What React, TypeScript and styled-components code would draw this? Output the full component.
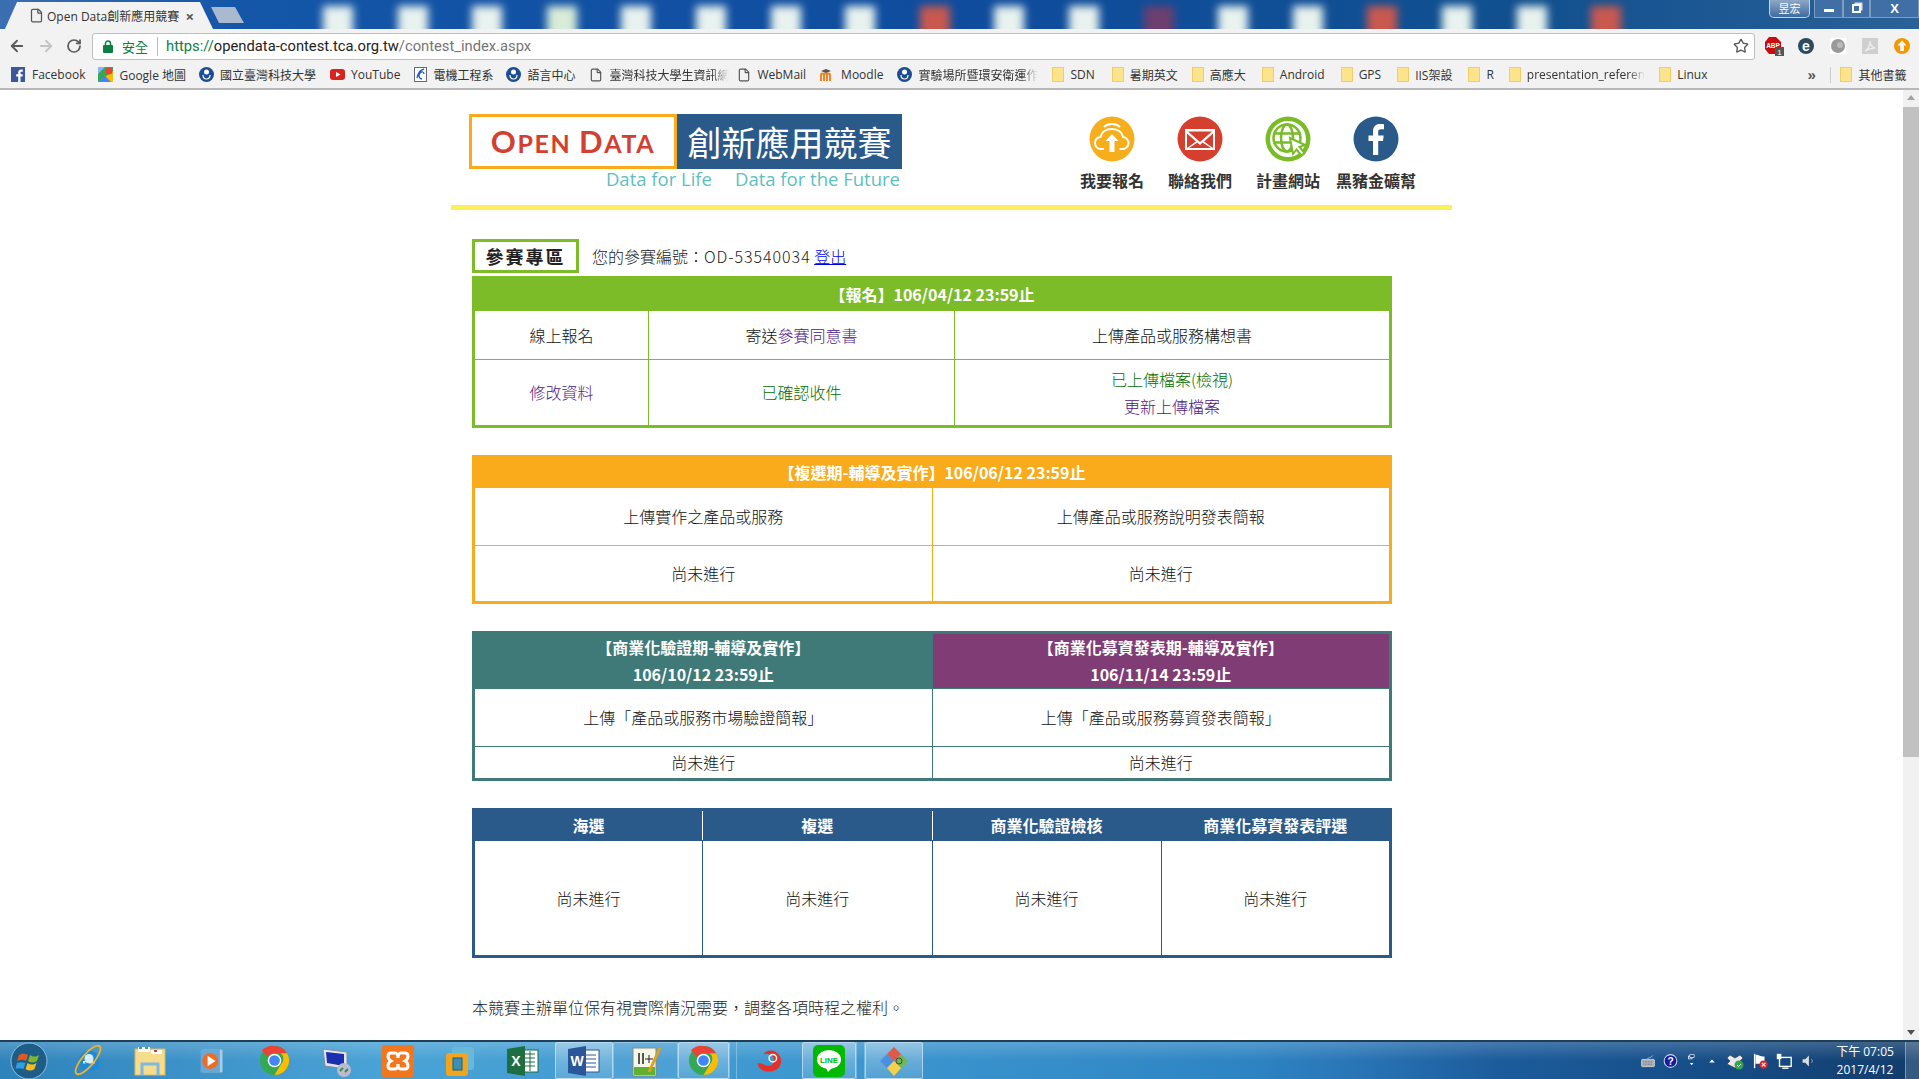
import { ArrowLeft, ArrowRight, File, RotateCw, Star } from "lucide-react";
import type { ReactNode } from "react";
import styled, { createGlobalStyle } from "styled-components";

const BODY_FONT = `"Noto Sans CJK TC", "Noto Sans", sans-serif`;
const UI_FONT = `"Open Sans", "Noto Sans CJK TC", sans-serif`;

const GlobalStyle = createGlobalStyle`
	html, body {
		height: 100%;
		margin: 0;
		overflow: hidden;
	}

	* {
		box-sizing: border-box;
	}
`;

const Screen = styled.div`
	display: flex;
	flex-direction: column;
	height: 100vh;
	background: #fff;
	font-family: ${BODY_FONT};
`;

/* ---------- tab strip ---------- */

const TabStrip = styled.div`
	display: flex;
	flex: none;
	height: 29px;
	overflow: hidden;
	background: linear-gradient(90deg, #3c6eb2 0, #1456a8 12%, #0f4c9e 50%, #11508f 80%, #2a6198 100%);
`;

const Tab = styled.div`
	display: flex;
	flex: none;
	align-items: center;
	gap: 3px;
	width: 208px;
	height: 27px;
	margin: 2px 0 0 5px;
	padding: 0 19px 0 24px;
	font-family: ${UI_FONT};
	font-size: 12px;
	color: #333;
	white-space: nowrap;
	background: #f2f2f2;
	clip-path: polygon(0 100%, 12px 0, 195px 0, 100% 100%);
`;

const TabTitle = styled.span`
	flex: 1;
`;

const TabClose = styled.span`
	font-size: 15px;
	font-weight: 700;
	color: #555;
`;

const NewTab = styled.div`
	flex: none;
	width: 33px;
	height: 16px;
	margin: 7px 0 0 -2px;
	background: #a9b9d0;
	clip-path: polygon(0 0, 24px 0, 100% 100%, 8px 100%);
`;

const Wallpaper = styled.div`
	display: flex;
	flex: 1;
	gap: 44.6px;
	min-width: 0;
	padding: 6px 0 0 79px;
	filter: blur(4px);
`;

const WallpaperIcon = styled.div<{ $tone: string }>`
	flex: none;
	width: 30px;
	height: 40px;
	background: ${({ $tone }) => $tone};
`;

const WindowControls = styled.div`
	display: flex;
	flex: none;
	height: 18px;
`;

const UserBadge = styled.div`
	width: 41px;
	margin-right: 4px;
	font-size: 11px;
	line-height: 16px;
	color: #fff;
	text-align: center;
	background: linear-gradient(#8ea7c6, #3f6c9f);
	border: 1px solid #c6d3e2;
	border-top: 0;
	border-radius: 0 0 5px 5px;
`;

const WindowButton = styled.div<{ $w: number }>`
	display: flex;
	align-items: center;
	justify-content: center;
	width: ${({ $w }) => $w}px;
	font-family: "Liberation Sans", sans-serif;
	font-size: 13px;
	font-weight: 700;
	color: #fff;
	background: #3f6fa4;
	border: 1px solid #7d9cc0;
	border-top: 0;
`;

const MinGlyph = styled.span`
	width: 10px;
	height: 3px;
	margin-top: 3px;
	background: #fff;
`;

const MaxGlyph = styled.span`
	width: 9px;
	height: 9px;
	border: 2px solid #fff;
	box-shadow: 2px -2px 0 -0.5px #dde;
`;

/* ---------- toolbar ---------- */

const Toolbar = styled.div`
	display: flex;
	flex: none;
	align-items: center;
	height: 32px;
	padding: 2px 0 0 8px;
	background: #f2f2f2;
`;

const NavButtons = styled.div`
	display: flex;
	flex: none;
	gap: 11px;
	align-items: center;
	width: 84px;
`;

const Omnibox = styled.div`
	display: flex;
	flex: none;
	align-items: center;
	width: 1663px;
	height: 27px;
	padding: 0 5px 0 10px;
	background: #fff;
	border: 1px solid #bfbfbf;
	border-radius: 3px;
`;

const SecureLabel = styled.span`
	margin-left: 9px;
	padding-right: 9px;
	font-size: 13px;
	color: #0b8043;
	border-right: 1px solid #bbb;
`;

const Url = styled.span`
	flex: 1;
	margin-left: 8px;
	font-family: "Roboto", sans-serif;
	font-size: 14.75px;
	color: #757575;
`;

const UrlPart = styled.span<{ $color: string }>`
	color: ${({ $color }) => $color};
`;

const Extensions = styled.div`
	display: flex;
	flex: 1;
	gap: 12px;
	align-items: center;
	padding-left: 9px;
`;

/* ---------- bookmarks ---------- */

const BookmarkBar = styled.div`
	display: flex;
	flex: none;
	align-items: center;
	height: 29px;
	padding-left: 11px;
	overflow: hidden;
	background: #f2f2f2;
	border-bottom: 2px solid #b8b8b8;
`;

const Bookmark = styled.div<{ $gap: number }>`
	display: flex;
	flex: none;
	gap: 6px;
	align-items: center;
	margin-right: ${({ $gap }) => $gap}px;
	font-family: ${UI_FONT};
	font-size: 12px;
	color: #333;
	white-space: nowrap;
`;

const BookmarkLabel = styled.span<{ $fade?: boolean }>`
	display: block;
	${({ $fade }) => $fade && "mask-image: linear-gradient(90deg, #000 86%, transparent 100%);"}
`;

const FolderIcon = styled.span`
	display: block;
	flex: none;
	width: 12px;
	height: 15px;
	background: #fde38c;
	border: 1px solid #f0cd66;
`;

const Overflow = styled.span`
	flex: none;
	width: 23px;
	font-family: "Liberation Sans", sans-serif;
	font-size: 15px;
	font-weight: 700;
	color: #555;
`;

const BarSeparator = styled.span`
	flex: none;
	width: 1px;
	height: 16px;
	margin-right: 9px;
	background: #ccc;
`;

/* ---------- page ---------- */

const Viewport = styled.div`
	display: flex;
	flex: 1;
	min-height: 0;
`;

const PageScroll = styled.div`
	flex: 1;
	overflow: hidden;
`;

const Scrollbar = styled.div`
	display: flex;
	flex: none;
	flex-direction: column;
	align-items: center;
	width: 16px;
	background: #f1f1f1;
`;

const ScrollArrow = styled.span<{ $down?: boolean }>`
	flex: none;
	width: 0;
	height: 0;
	margin: 5px 0;
	border-right: 4px solid transparent;
	border-left: 4px solid transparent;
	${({ $down }) => ($down ? "border-top: 5px solid #505050;" : "border-bottom: 5px solid #a3a3a3;")}
`;

const ScrollThumb = styled.div`
	flex: none;
	width: 100%;
	height: 650px;
	margin-top: 2px;
	background: #c1c1c1;
`;

const ScrollRest = styled.div`
	flex: 1;
`;

const Page = styled.div`
	width: 1001px;
	margin: 0 auto;
`;

const Header = styled.header`
	display: flex;
	justify-content: space-between;
	height: 120px;
	padding: 24px 36px 0 18px;
	border-bottom: 5px solid #ffef57;
`;

const Brand = styled.div`
	width: 433px;
`;

const LogoRow = styled.div`
	display: flex;
	height: 55px;
`;

const LogoOpen = styled.div`
	display: flex;
	align-items: baseline;
	justify-content: center;
	width: 208px;
	padding-top: 5px;
	font-family: "Lato", sans-serif;
	font-size: 25px;
	font-weight: 700;
	letter-spacing: 1.6px;
	color: #d33f31;
	white-space: pre;
	border: 3px solid #f9ab1b;
`;

const LogoCap = styled.span`
	font-size: 31px;
`;

const LogoTitle = styled.div`
	display: flex;
	flex: 1;
	align-items: center;
	justify-content: center;
	font-size: 34px;
	line-height: 1;
	color: #fff;
	background: #2a5a8a;
`;

const Tagline = styled.div`
	display: flex;
	gap: 23px;
	justify-content: flex-end;
	padding-right: 2px;
	font-family: "Open Sans", sans-serif;
	font-size: 18.5px;
	line-height: 20px;
	color: #5dbfc1;
`;

const QuickLinks = styled.nav`
	display: flex;
	gap: 8px;
	padding-top: 2px;
`;

const QuickLink = styled.div`
	display: flex;
	flex-direction: column;
	gap: 7px;
	align-items: center;
	width: 80px;
	font-size: 16px;
	font-weight: 700;
	line-height: 22px;
	color: #333;
	white-space: nowrap;
`;

const Content = styled.main`
	padding: 29px 0 0 21px;
`;

const ZoneHead = styled.div`
	display: flex;
	gap: 13px;
	align-items: center;
	height: 34px;
	margin-bottom: 3px;
	font-size: 16px;
	font-weight: 300;
	color: #222;
`;

const ZoneBadge = styled.div`
	flex: none;
	width: 107px;
	font-size: 18px;
	font-weight: 700;
	line-height: 28px;
	letter-spacing: 2px;
	text-align: center;
	border: 3px solid #7cbc28;
`;

const ZoneCode = styled.span`
	letter-spacing: 0.95px;
`;

const ZoneLink = styled.a`
	color: #0000ee;
	text-decoration: underline;
`;

const StageTable = styled.table<{ $accent: string }>`
	width: 920px;
	margin-bottom: 27px;
	font-size: 16px;
	font-weight: 300;
	line-height: 27px;
	color: #111;
	text-align: center;
	table-layout: fixed;
	border-collapse: collapse;
	border: 3px solid ${({ $accent }) => $accent};

	th {
		padding: 0;
		font-weight: 700;
		color: #fff;
		background: ${({ $accent }) => $accent};
		border: 1px solid ${({ $accent }) => $accent};
	}

	td {
		padding: 0;
		border: 1px solid ${({ $accent }) => $accent};
	}
`;

const SplitHead = styled.th<{ $bg: string }>`
	&& {
		background: ${({ $bg }) => $bg};
	}
`;

const LightDivider = styled.th`
	&& {
		border-right-color: #fff;
	}
`;

const Row = styled.tr<{ $h: number }>`
	height: ${({ $h }) => $h}px;
`;

const Col = styled.col<{ $w: number }>`
	width: ${({ $w }) => $w}px;
`;

const Visited = styled.span`
	color: #4b1585;
`;

const Done = styled.span`
	color: #006f00;
`;

const Notice = styled.p`
	margin: 36px 0 0;
	font-size: 16px;
	font-weight: 300;
	line-height: 27px;
	color: #222;
`;

/* ---------- taskbar ---------- */

const Taskbar = styled.footer`
	display: flex;
	flex: none;
	align-items: stretch;
	height: 39px;
	background:
		linear-gradient(rgb(255 255 255 / 18%), rgb(255 255 255 / 0%) 50%),
		linear-gradient(90deg, #2f83bb 0, #4aa3d6 20%, #3c96cf 45%, #2e84c3 65%, #2a77b8 70%, #1c5c9c 78%, #164c85 90%, #123d6c 100%);
	border-top: 2px solid #1e3f55;
`;

const TaskButton = styled.div<{ $w: number; $active?: boolean; $open?: boolean }>`
	display: flex;
	flex: none;
	align-items: center;
	justify-content: center;
	width: ${({ $w }) => $w}px;
	${({ $active }) =>
		$active &&
		"background: linear-gradient(rgb(255 255 255 / 35%), rgb(255 255 255 / 12%)); border: 1px solid rgb(225 240 250 / 60%); border-radius: 2px;"}
	${({ $open }) =>
		$open && "border: 1px solid rgb(225 240 250 / 35%); border-radius: 2px; background: rgb(255 255 255 / 6%);"}
`;

const TaskGap = styled.div<{ $w: number }>`
	flex: none;
	width: ${({ $w }) => $w}px;
	border-right: 1px solid rgb(225 240 250 / 35%);
	border-left: 1px solid rgb(225 240 250 / 35%);
`;

const Tray = styled.div`
	display: flex;
	flex: 1;
	gap: 6px;
	align-items: center;
	justify-content: flex-end;
`;

const TrayIcon = styled.span<{ $w: number }>`
	display: flex;
	flex: none;
	justify-content: center;
	width: ${({ $w }) => $w}px;
	font-size: 0;
`;

const Clock = styled.div`
	flex: none;
	width: 76px;
	margin: 0 -4px 0 4px;
	font-family: ${UI_FONT};
	font-size: 12px;
	line-height: 18px;
	color: #fff;
	text-align: center;
`;

const ShowDesktop = styled.div`
	flex: none;
	align-self: stretch;
	width: 14px;
	background: rgb(255 255 255 / 15%);
	border-left: 1px solid rgb(255 255 255 / 35%);
`;

/* ---------- drawings ---------- */

function Svg({ size, children }: { size: number; children: ReactNode }) {
	return (
		<svg width={size} height={size} viewBox="0 0 32 32" aria-hidden="true">
			{children}
		</svg>
	);
}

const BallBack = ({ color }: { color: string }) => <circle cx="23" cy="23" r="22.5" fill={color} />;

function QuickIcon({ kind }: { kind: "upload" | "mail" | "web" | "fb" }) {
	return (
		<svg width="46" height="46" viewBox="0 0 46 46" aria-hidden="true">
			{kind === "upload" && (
				<>
					<BallBack color="#f6ae1c" />
					<path
						d="M15 33h-3c-3.500 0-6-2.500-6-6s2.500-5.500 5.500-6c1-5 5.500-8 11.500-8s10.500 3.500 11 8c3 .5 5.500 3 5.500 6s-2.500 6-6 6h-3"
						fill="none"
						stroke="#fff"
						strokeWidth="2"
					/>
					<path d="M15 11c4-4 12-4 16 0" fill="none" stroke="#fff" strokeWidth="2" />
					<path d="M23 18l6.500 7h-4v11h-5V25h-4z" fill="#fff" />
				</>
			)}
			{kind === "mail" && (
				<>
					<BallBack color="#d5402e" />
					<rect x="8" y="13" width="30" height="21" fill="#fff" />
					<path d="M11 15.500h24L23 26zM10 17.500l9 8-9 6.500zM36 17.500l-9 8 9 6.500zM12 32l8.500-5.500L23 29l2.500-2.500L34 32z" fill="#d5402e" />
				</>
			)}
			{kind === "web" && (
				<>
					<BallBack color="#79bc28" />
					<circle cx="23" cy="23" r="18" fill="#fff" />
					<circle cx="22" cy="22" r="13.500" fill="none" stroke="#79bc28" strokeWidth="2.500" />
					<ellipse cx="22" cy="22" rx="6" ry="13.500" fill="none" stroke="#79bc28" strokeWidth="2.500" />
					<path d="M8.500 17.500h27M8.500 26.500h27" stroke="#79bc28" strokeWidth="2.500" />
					<path d="M25 22l15 7-5.500 2 5 6-3 2.500-5-6-3.500 4.500z" fill="#fff" stroke="#79bc28" strokeWidth="2" />
				</>
			)}
			{kind === "fb" && (
				<>
					<BallBack color="#2a5a8a" />
					<path d="M20 39V25h-4.500v-5.500H20v-4c0-5 2.800-7.500 7-7.500 2 0 3.500.1 4 .2v5h-3c-2.200 0-2.800 1-2.800 2.700v3.600h5.500l-.7 5.500h-4.800v14z" fill="#fff" />
				</>
			)}
		</svg>
	);
}

function LockIcon() {
	return (
		<svg width="10" height="13" viewBox="0 0 10 13" aria-hidden="true">
			<rect y="5" width="10" height="8" rx="1" fill="#0b8043" />
			<path d="M2.500 6V3.500a2.500 2.500 0 0 1 5 0V6" fill="none" stroke="#0b8043" strokeWidth="1.500" />
		</svg>
	);
}

function ExtensionIcon({ kind }: { kind: "abp" | "e" | "gray" | "pdf" | "up" }) {
	return (
		<svg width="20" height="20" viewBox="0 0 20 20" aria-hidden="true">
			{kind === "abp" && (
				<>
					<path d="M5 1h7l5 5v7l-5 5H5l-4-5V6z" fill="#c70d0d" />
					<text x="9" y="12" fontSize="6.500" fontWeight="700" fontFamily="Liberation Sans" textAnchor="middle" fill="#fff">
						ABP
					</text>
					<rect x="11" y="11" width="9" height="9" fill="#555" />
					<text x="15.500" y="18.500" fontSize="8" fontFamily="Liberation Sans" textAnchor="middle" fill="#fff">
						1
					</text>
				</>
			)}
			{kind === "e" && (
				<>
					<circle cx="10" cy="10" r="8" fill="#2c4a60" />
					<text x="10" y="15" fontSize="14" fontWeight="700" fontFamily="Liberation Sans" textAnchor="middle" fill="#fff">
						e
					</text>
				</>
			)}
			{kind === "gray" && (
				<>
					<rect x="2" y="2" width="16" height="16" fill="#fff" />
					<circle cx="10" cy="10" r="7" fill="#999" />
					<circle cx="12" cy="9" r="3" fill="#bbb" />
				</>
			)}
			{kind === "pdf" && (
				<>
					<rect x="2" y="2" width="16" height="16" fill="#cfcfcf" />
					<path d="M5 15c3-2 5-6 5-10 0 3 2 6 5 7-3 0-7 1-10 3z" fill="none" stroke="#eee" strokeWidth="1.300" />
				</>
			)}
			{kind === "up" && (
				<>
					<circle cx="10" cy="10" r="8" fill="#f29900" />
					<path d="M10 4.500l4.500 5h-2.700V15H8.200V9.500H5.500z" fill="#fff" />
				</>
			)}
		</svg>
	);
}

function BookmarkIcon({ kind }: { kind: "fb" | "maps" | "ntust" | "yt" | "moodle" }) {
	return (
		<svg width="15" height="15" viewBox="0 0 15 15" aria-hidden="true">
			{kind === "fb" && (
				<>
					<rect width="14" height="15" fill="#3b5998" />
					<path d="M9.500 15V9.500h2l.3-2.300H9.500V5.800c0-.7.200-1.100 1.100-1.100h1.200V2.600c-.2 0-.9-.1-1.700-.1-1.700 0-2.900 1-2.900 3v1.700h-2v2.300h2V15z" fill="#fff" />
				</>
			)}
			{kind === "maps" && (
				<>
					<rect width="15" height="15" fill="#34a853" />
					<path d="M0 15L15 4v11z" fill="#fbbc04" />
					<path d="M0 15l7-6 6 6z" fill="#4285f4" />
					<path d="M0 0h7L0 7z" fill="#8ab4f8" />
					<circle cx="11" cy="4" r="3.500" fill="#ea4335" />
				</>
			)}
			{kind === "ntust" && (
				<>
					<circle cx="7.500" cy="7.500" r="7.500" fill="#1c4c94" />
					<circle cx="7.500" cy="5" r="2.500" fill="#fff" />
					<path d="M4 8c0 3 1.500 4 3.500 4S11 11 11 8" fill="none" stroke="#fff" strokeWidth="1.200" />
				</>
			)}
			{kind === "yt" && (
				<>
					<rect y="2" width="15" height="11" rx="3" fill="#d9231f" />
					<path d="M6 5l4.500 2.500L6 10z" fill="#fff" />
				</>
			)}
			{kind === "moodle" && (
				<>
					<path d="M1 14V8c0-2 3-2 3 0v6M4 14V8c0-2 3-2 3 0v6M7 14V8c0-2 3-2 3 0v6" fill="none" stroke="#f58220" strokeWidth="2" />
					<path d="M1 4l5-2 5 2-5 2z" fill="#555" />
				</>
			)}
		</svg>
	);
}

function EeIcon() {
	return (
		<svg width="13" height="15" viewBox="0 0 13 15" aria-hidden="true">
			<rect x=".5" y=".5" width="12" height="14" fill="#fff" stroke="#667" />
			<path d="M3 11c1-5 3-8 7-9M8 12C5 12 4 8 6 6s4-1 4 1" fill="none" stroke="#1a5fc0" strokeWidth="1.300" />
		</svg>
	);
}

function ChromeIcon() {
	return (
		<Svg size={31}>
			<circle cx="16" cy="16" r="15" fill="#34a853" />
			<path d="M16 1a15 15 0 0 1 13 7.500H16a7.500 7.500 0 0 0-6.800 4.200L3 5.500A15 15 0 0 1 16 1z" fill="#ea4335" />
			<path d="M29 8.500A15 15 0 0 1 16 31l6.500-11a7.500 7.500 0 0 0 0-11.500z" fill="#fbbc04" />
			<circle cx="16" cy="16" r="7" fill="#fff" />
			<circle cx="16" cy="16" r="5.500" fill="#4285f4" />
		</Svg>
	);
}

function TaskIcon({ kind }: { kind: string }) {
	switch (kind) {
		case "start":
			return (
				<svg width="38" height="38" viewBox="0 0 38 38" aria-hidden="true">
					<circle cx="19" cy="19" r="18" fill="#1d5d88" stroke="#8fc1de" />
					<path d="M9 13c3-2 6-2 9 0l-2 6c-3-2-6-1-9 0z" fill="#e8561f" />
					<path d="M20 13c3 2 6 2 9 0l-2 6c-3 2-6 2-9 0z" fill="#7cb82f" />
					<path d="M7 21c3-1 6-1 8.500 0l-2 6c-3-1-6-1-8 0z" fill="#2e9fe0" />
					<path d="M17.500 21c3 2 6 2 9 0l-2 6c-3 2-6 2-9 0z" fill="#f6bb1d" />
				</svg>
			);
		case "ie":
			return (
				<Svg size={32}>
					<circle cx="17" cy="16" r="10.500" fill="#1c8ad6" />
					<circle cx="17" cy="13.500" r="4.500" fill="#d6eefb" />
					<path d="M11 16h12v2.500H11z" fill="#d6eefb" />
					<path d="M21 21h6v3h-6zM13 17c0 4 5 6 9 4" fill="#1c8ad6" />
					<ellipse cx="16" cy="15" rx="6" ry="18" transform="rotate(40 16 15)" fill="none" stroke="#efb22b" strokeWidth="1.800" />
				</Svg>
			);
		case "folder":
			return (
				<Svg size={32}>
					<rect x="1" y="4" width="30" height="26" fill="#f6dd8c" stroke="#d8b860" />
					<rect x="4" y="2" width="12" height="5" fill="#fff" />
					<rect x="17" y="5" width="11" height="4" fill="#fff" />
					<path d="M5 3h3M11 3h3" stroke="#4aa84a" strokeWidth="2" />
					<path d="M20 6h3" stroke="#d93a2e" strokeWidth="2" />
					<path d="M8 30V19h16v11" fill="none" stroke="#7fb8e0" strokeWidth="3" />
				</Svg>
			);
		case "wmp":
			return (
				<Svg size={28}>
					<rect x="5" y="3" width="23" height="26" fill="#a9cde6" />
					<rect x="3" y="3" width="22" height="26" fill="#6ba7d3" />
					<circle cx="14" cy="16" r="9" fill="#f26a1b" />
					<path d="M11 10l9 6-9 6z" fill="#fff" />
				</Svg>
			);
		case "chrome":
			return <ChromeIcon />;
		case "rdp":
			return (
				<Svg size={32}>
					<path d="M3 4l24 3v17L5 21z" fill="#dfe6ef" stroke="#889" />
					<path d="M6 7l18 2v12L7 18z" fill="#1a2fb0" />
					<circle cx="24" cy="25" r="7" fill="#bbc" />
					<path d="M20 26l3-3M28 24l-3 3" stroke="#2a8f4a" strokeWidth="1.800" />
				</Svg>
			);
		case "xampp":
			return (
				<Svg size={32}>
					<rect width="32" height="32" rx="2" fill="#f2761c" />
					<path d="M9 8h4c3 0 3 5 3 5s0-5 3-5h4c4 0 4 6 0 8 4 2 4 8 0 8h-4c-3 0-3-5-3-5s0 5-3 5H9c-4 0-4-6 0-8-4-2-4-8 0-8z" fill="none" stroke="#fff" strokeWidth="3" />
				</Svg>
			);
		case "vmware":
			return (
				<Svg size={32}>
					<rect x="8" y="2" width="22" height="23" rx="3" fill="#69b8d6" />
					<rect x="2" y="8" width="22" height="23" rx="3" fill="#f2a51c" />
					<rect x="9" y="13" width="9" height="12" fill="#3a8fb7" stroke="#19607f" />
				</Svg>
			);
		case "excel":
			return (
				<Svg size={32}>
					<rect x="14" y="5" width="17" height="22" fill="#fff" stroke="#1d6f42" />
					<path d="M18 9h10M18 13h10M18 17h10M18 21h10M23 6v20" stroke="#1d6f42" />
					<path d="M0 4l18-3v30L0 28z" fill="#1d6f42" />
					<text x="9" y="21" fontSize="14" fontWeight="700" fontFamily="Liberation Sans" textAnchor="middle" fill="#fff">
						X
					</text>
				</Svg>
			);
		case "word":
			return (
				<Svg size={32}>
					<rect x="14" y="5" width="17" height="22" fill="#fff" stroke="#2b579a" />
					<path d="M18 10h10M18 14h10M18 18h10M18 22h10" stroke="#2b579a" />
					<path d="M0 4l18-3v30L0 28z" fill="#2b579a" />
					<text x="9" y="21" fontSize="14" fontWeight="700" fontFamily="Liberation Sans" textAnchor="middle" fill="#fff">
						W
					</text>
				</Svg>
			);
		case "npp":
			return (
				<Svg size={32}>
					<rect x="3" y="3" width="23" height="28" fill="#f4f6e6" stroke="#888" />
					<rect x="4" y="22" width="21" height="8" fill="#62b02f" />
					<path d="M9 8v11M13 8v11" stroke="#222" strokeWidth="1.500" />
					<path d="M15 14h8M19 10v8" stroke="#222" />
					<path d="M19 27L30 3" stroke="#e0a020" strokeWidth="3" />
				</Svg>
			);
		case "xmind":
			return (
				<Svg size={30}>
					<path d="M3 18c0 8 12 12 20 7 6-4 7-13 0-18-5-4-12-2-14 2 5-1 10 0 11 5s-3 8-7 7-6-3-10-3z" fill="#e3302a" />
					<circle cx="19" cy="13" r="4" fill="none" stroke="#fff" strokeWidth="1.500" />
				</Svg>
			);
		case "line":
			return (
				<Svg size={32}>
					<rect width="32" height="32" rx="5" fill="#00b900" />
					<ellipse cx="16" cy="14.500" rx="12" ry="9.500" fill="#fff" />
					<path d="M13 23l2 4 5-5z" fill="#fff" />
					<text x="16" y="18" fontSize="8" fontWeight="700" fontFamily="Liberation Sans" textAnchor="middle" fill="#00b900">
						LINE
					</text>
				</Svg>
			);
		default:
			return (
				<Svg size={32}>
					<path d="M9 9l7 7-7 7-7-7z" fill="#4a8fe0" />
					<path d="M23 9l7 7-7 7-7-7z" fill="#6fb84a" />
					<path d="M16 16l7 7-7 8-7-8z" fill="#f6d24a" />
					<path d="M16 2l7 7-7 7-7-7z" fill="#e0584a" />
					<circle cx="21" cy="16" r="3" fill="none" stroke="#444" />
				</Svg>
			);
	}
}

function TrayGlyph({ kind }: { kind: string }) {
	return (
		<svg width="20" height="20" viewBox="0 0 20 20" aria-hidden="true">
			{kind === "keyboard" && (
				<>
					<rect x="2" y="8" width="16" height="9" rx="1" fill="#aab0b5" stroke="#ddd" />
					<path d="M4 11h12M4 14h12" stroke="#666" strokeDasharray="1 1" />
					<path d="M9 8c0-3 5-1 7-5" fill="none" stroke="#bbb" />
				</>
			)}
			{kind === "help" && (
				<>
					<circle cx="10" cy="10" r="7.500" fill="#1818a8" stroke="#cdd" strokeWidth="1.200" />
					<text x="10" y="14.500" fontSize="12" fontWeight="700" fontFamily="Liberation Sans" textAnchor="middle" fill="#fff">
						?
					</text>
				</>
			)}
			{kind === "switch" && (
				<>
					<rect x="5" y="3" width="5" height="4" fill="none" stroke="#fff" />
					<rect x="7" y="1" width="6" height="4" fill="#123d6c" stroke="#fff" />
					<path d="M7 13h5l-2.500 3z" fill="#fff" />
				</>
			)}
			{kind === "up" && <path d="M6 12l4-4 4 4z" fill="#fff" />}
			{kind === "box" && (
				<>
					<path d="M5 4l5 3 5-3 3 3-3 3 3 3-8 4-8-4 3-3-3-3z" fill="#e8e8e8" stroke="#333" strokeWidth=".6" />
					<circle cx="14" cy="14" r="4.500" fill="#2fa84f" />
					<path d="M12 14l1.500 1.500L16 13" fill="none" stroke="#fff" />
				</>
			)}
			{kind === "flag" && (
				<>
					<path d="M4 2v16" stroke="#fff" strokeWidth="1.500" />
					<path d="M5 3c4 0 5 2 10 2v8H5z" fill="#fff" />
					<circle cx="14" cy="14" r="4.500" fill="#e0262a" />
					<path d="M12 12l4 4M16 12l-4 4" stroke="#fff" strokeWidth="1.300" />
				</>
			)}
			{kind === "net" && (
				<>
					<rect x="5" y="6" width="13" height="10" fill="none" stroke="#fff" strokeWidth="1.500" />
					<rect x="2" y="2" width="5" height="6" fill="#fff" />
					<path d="M8 18h7" stroke="#fff" strokeWidth="1.500" />
				</>
			)}
			{kind === "sound" && (
				<>
					<path d="M4 8h3l4-4v12l-4-4H4z" fill="#ddd" />
					<path d="M14 8c1 1 1 3 0 4" fill="none" stroke="#aab" />
				</>
			)}
		</svg>
	);
}

/* ---------- data ---------- */

const PAPER = "#e8f2ee";
const WALLPAPER = [PAPER, PAPER, PAPER, "#d9ecd9", PAPER, PAPER, PAPER, PAPER, "#c9594f", PAPER, PAPER, "#6d3f6f", PAPER, PAPER, "#c9594f", PAPER, PAPER, "#c9594f"];

const TRAY: [string, number][] = [
	["keyboard", 16],
	["help", 17],
	["switch", 14],
	["up", 14],
	["box", 20],
	["flag", 18],
	["net", 18],
	["sound", 18],
];

const FOLDERS: [string, number, boolean?][] = [
	["SDN", 17],
	["暑期英文", 14],
	["高應大", 16],
	["Android", 16],
	["GPS", 16],
	["IIS架設", 16],
	["R", 15],
	["presentation_referen", 14, true],
	["Linux", 100],
];

const FINALS = ["海選", "複選", "商業化驗證檢核", "商業化募資發表評選"];

export default function App() {
	return (
		<Screen>
			<GlobalStyle />
			<TabStrip>
				<Tab>
					<File size={15} color="#555" />
					<TabTitle>Open Data創新應用競賽</TabTitle>
					<TabClose>×</TabClose>
				</Tab>
				<NewTab />
				<Wallpaper>
					{WALLPAPER.map((tone, i) => (
						<WallpaperIcon key={i} $tone={tone} />
					))}
				</Wallpaper>
				<WindowControls>
					<UserBadge>昱宏</UserBadge>
					<WindowButton $w={29}>
						<MinGlyph />
					</WindowButton>
					<WindowButton $w={27}>
						<MaxGlyph />
					</WindowButton>
					<WindowButton $w={49}>X</WindowButton>
				</WindowControls>
			</TabStrip>

			<Toolbar>
				<NavButtons>
					<ArrowLeft size={18} color="#5a5a5a" strokeWidth={2.4} />
					<ArrowRight size={18} color="#c4c4c4" strokeWidth={2.4} />
					<RotateCw size={16} color="#5a5a5a" strokeWidth={2.6} />
				</NavButtons>
				<Omnibox>
					<LockIcon />
					<SecureLabel>安全</SecureLabel>
					<Url>
						<UrlPart $color="#0b8043">https://</UrlPart>
						<UrlPart $color="#222">opendata-contest.tca.org.tw</UrlPart>/contest_index.aspx
					</Url>
					<Star size={16} color="#555" strokeWidth={2} />
				</Omnibox>
				<Extensions>
					<ExtensionIcon kind="abp" />
					<ExtensionIcon kind="e" />
					<ExtensionIcon kind="gray" />
					<ExtensionIcon kind="pdf" />
					<ExtensionIcon kind="up" />
				</Extensions>
			</Toolbar>

			<BookmarkBar>
				<Bookmark $gap={13}>
					<BookmarkIcon kind="fb" />
					<BookmarkLabel>Facebook</BookmarkLabel>
				</Bookmark>
				<Bookmark $gap={13}>
					<BookmarkIcon kind="maps" />
					<BookmarkLabel>Google 地圖</BookmarkLabel>
				</Bookmark>
				<Bookmark $gap={14}>
					<BookmarkIcon kind="ntust" />
					<BookmarkLabel>國立臺灣科技大學</BookmarkLabel>
				</Bookmark>
				<Bookmark $gap={14}>
					<BookmarkIcon kind="yt" />
					<BookmarkLabel>YouTube</BookmarkLabel>
				</Bookmark>
				<Bookmark $gap={13}>
					<EeIcon />
					<BookmarkLabel>電機工程系</BookmarkLabel>
				</Bookmark>
				<Bookmark $gap={14}>
					<BookmarkIcon kind="ntust" />
					<BookmarkLabel>語言中心</BookmarkLabel>
				</Bookmark>
				<Bookmark $gap={8}>
					<File size={14} color="#555" />
					<BookmarkLabel $fade>臺灣科技大學生資訊網</BookmarkLabel>
				</Bookmark>
				<Bookmark $gap={14}>
					<File size={14} color="#555" />
					<BookmarkLabel>WebMail</BookmarkLabel>
				</Bookmark>
				<Bookmark $gap={14}>
					<BookmarkIcon kind="moodle" />
					<BookmarkLabel>Moodle</BookmarkLabel>
				</Bookmark>
				<Bookmark $gap={14}>
					<BookmarkIcon kind="ntust" />
					<BookmarkLabel $fade>實驗場所暨環安衛運作</BookmarkLabel>
				</Bookmark>
				{FOLDERS.map(([name, gap, fade]) => (
					<Bookmark key={name} $gap={gap}>
						<FolderIcon />
						<BookmarkLabel $fade={fade}>{name}</BookmarkLabel>
					</Bookmark>
				))}
				<Overflow>»</Overflow>
				<BarSeparator />
				<Bookmark $gap={0}>
					<FolderIcon />
					<BookmarkLabel>其他書籤</BookmarkLabel>
				</Bookmark>
			</BookmarkBar>

			<Viewport>
				<PageScroll>
					<Page>
						<Header>
							<Brand>
								<LogoRow>
									<LogoOpen>
										<LogoCap>O</LogoCap>PEN <LogoCap>D</LogoCap>ATA
									</LogoOpen>
									<LogoTitle>創新應用競賽</LogoTitle>
								</LogoRow>
								<Tagline>
									<span>Data for Life</span>
									<span>Data for the Future</span>
								</Tagline>
							</Brand>
							<QuickLinks>
								<QuickLink>
									<QuickIcon kind="upload" />
									我要報名
								</QuickLink>
								<QuickLink>
									<QuickIcon kind="mail" />
									聯絡我們
								</QuickLink>
								<QuickLink>
									<QuickIcon kind="web" />
									計畫網站
								</QuickLink>
								<QuickLink>
									<QuickIcon kind="fb" />
									黑豬金礦幫
								</QuickLink>
							</QuickLinks>
						</Header>
						<Content>
							<ZoneHead>
								<ZoneBadge>參賽專區</ZoneBadge>
								<span>
									您的參賽編號：<ZoneCode>OD-53540034</ZoneCode> <ZoneLink>登出</ZoneLink>
								</span>
							</ZoneHead>

							<StageTable $accent="#7cbc28">
								<colgroup>
									<Col $w={175} />
									<Col $w={306} />
									<Col $w={436} />
								</colgroup>
								<thead>
									<Row $h={33}>
										<th colSpan={3}>【報名】106/04/12 23:59止</th>
									</Row>
								</thead>
								<tbody>
									<Row $h={49}>
										<td>線上報名</td>
										<td>
											寄送<Visited>參賽同意書</Visited>
										</td>
										<td>上傳產品或服務構想書</td>
									</Row>
									<Row $h={67}>
										<td>
											<Visited>修改資料</Visited>
										</td>
										<td>
											<Done>已確認收件</Done>
										</td>
										<td>
											<Done>已上傳檔案(檢視)</Done>
											<br />
											<Visited>更新上傳檔案</Visited>
										</td>
									</Row>
								</tbody>
							</StageTable>

							<StageTable $accent="#f9ab1b">
								<thead>
									<Row $h={31}>
										<th colSpan={2}>【複選期-輔導及實作】106/06/12 23:59止</th>
									</Row>
								</thead>
								<tbody>
									<Row $h={58}>
										<td>上傳實作之產品或服務</td>
										<td>上傳產品或服務說明發表簡報</td>
									</Row>
									<Row $h={57}>
										<td>尚未進行</td>
										<td>尚未進行</td>
									</Row>
								</tbody>
							</StageTable>

							<StageTable $accent="#3f7a79">
								<thead>
									<Row $h={55}>
										<SplitHead $bg="#3f7a79">
											【商業化驗證期-輔導及實作】
											<br />
											106/10/12 23:59止
										</SplitHead>
										<SplitHead $bg="#7f3c75">
											【商業化募資發表期-輔導及實作】
											<br />
											106/11/14 23:59止
										</SplitHead>
									</Row>
								</thead>
								<tbody>
									<Row $h={58}>
										<td>上傳「產品或服務市場驗證簡報」</td>
										<td>上傳「產品或服務募資發表簡報」</td>
									</Row>
									<Row $h={33}>
										<td>尚未進行</td>
										<td>尚未進行</td>
									</Row>
								</tbody>
							</StageTable>

							<StageTable $accent="#2a5a8a">
								<thead>
									<Row $h={31}>
										{FINALS.map((name, i) =>
											i < 2 ? <LightDivider key={name}>{name}</LightDivider> : <th key={name}>{name}</th>,
										)}
									</Row>
								</thead>
								<tbody>
									<Row $h={116}>
										{FINALS.map((name) => (
											<td key={name}>尚未進行</td>
										))}
									</Row>
								</tbody>
							</StageTable>

							<Notice>本競賽主辦單位保有視實際情況需要，調整各項時程之權利。</Notice>
						</Content>
					</Page>
				</PageScroll>
				<Scrollbar>
					<ScrollArrow />
					<ScrollThumb />
					<ScrollRest />
					<ScrollArrow $down />
				</Scrollbar>
			</Viewport>

			<Taskbar>
				<TaskButton $w={57}>
					<TaskIcon kind="start" />
				</TaskButton>
				{["ie", "folder", "wmp", "chrome", "rdp", "xampp", "vmware"].map((kind) => (
					<TaskButton key={kind} $w={62}>
						<TaskIcon kind={kind} />
					</TaskButton>
				))}
				<TaskButton $w={64}>
					<TaskIcon kind="excel" />
				</TaskButton>
				<TaskButton $w={58} $active>
					<TaskIcon kind="word" />
				</TaskButton>
				<TaskButton $w={65} $open>
					<TaskIcon kind="npp" />
				</TaskButton>
				<TaskButton $w={51} $active>
					<TaskIcon kind="chrome" />
				</TaskButton>
				<TaskGap $w={8} />
				<TaskButton $w={65}>
					<TaskIcon kind="xmind" />
				</TaskButton>
				<TaskButton $w={54} $active>
					<TaskIcon kind="line" />
				</TaskButton>
				<TaskGap $w={9} />
				<TaskButton $w={58} $active>
					<TaskIcon kind="app" />
				</TaskButton>
				<Tray>
					{TRAY.map(([kind, w]) => (
						<TrayIcon key={kind} $w={w}>
							<TrayGlyph kind={kind} />
						</TrayIcon>
					))}
					<Clock>
						下午 07:05
						<br />
						2017/4/12
					</Clock>
					<ShowDesktop />
				</Tray>
			</Taskbar>
		</Screen>
	);
}
